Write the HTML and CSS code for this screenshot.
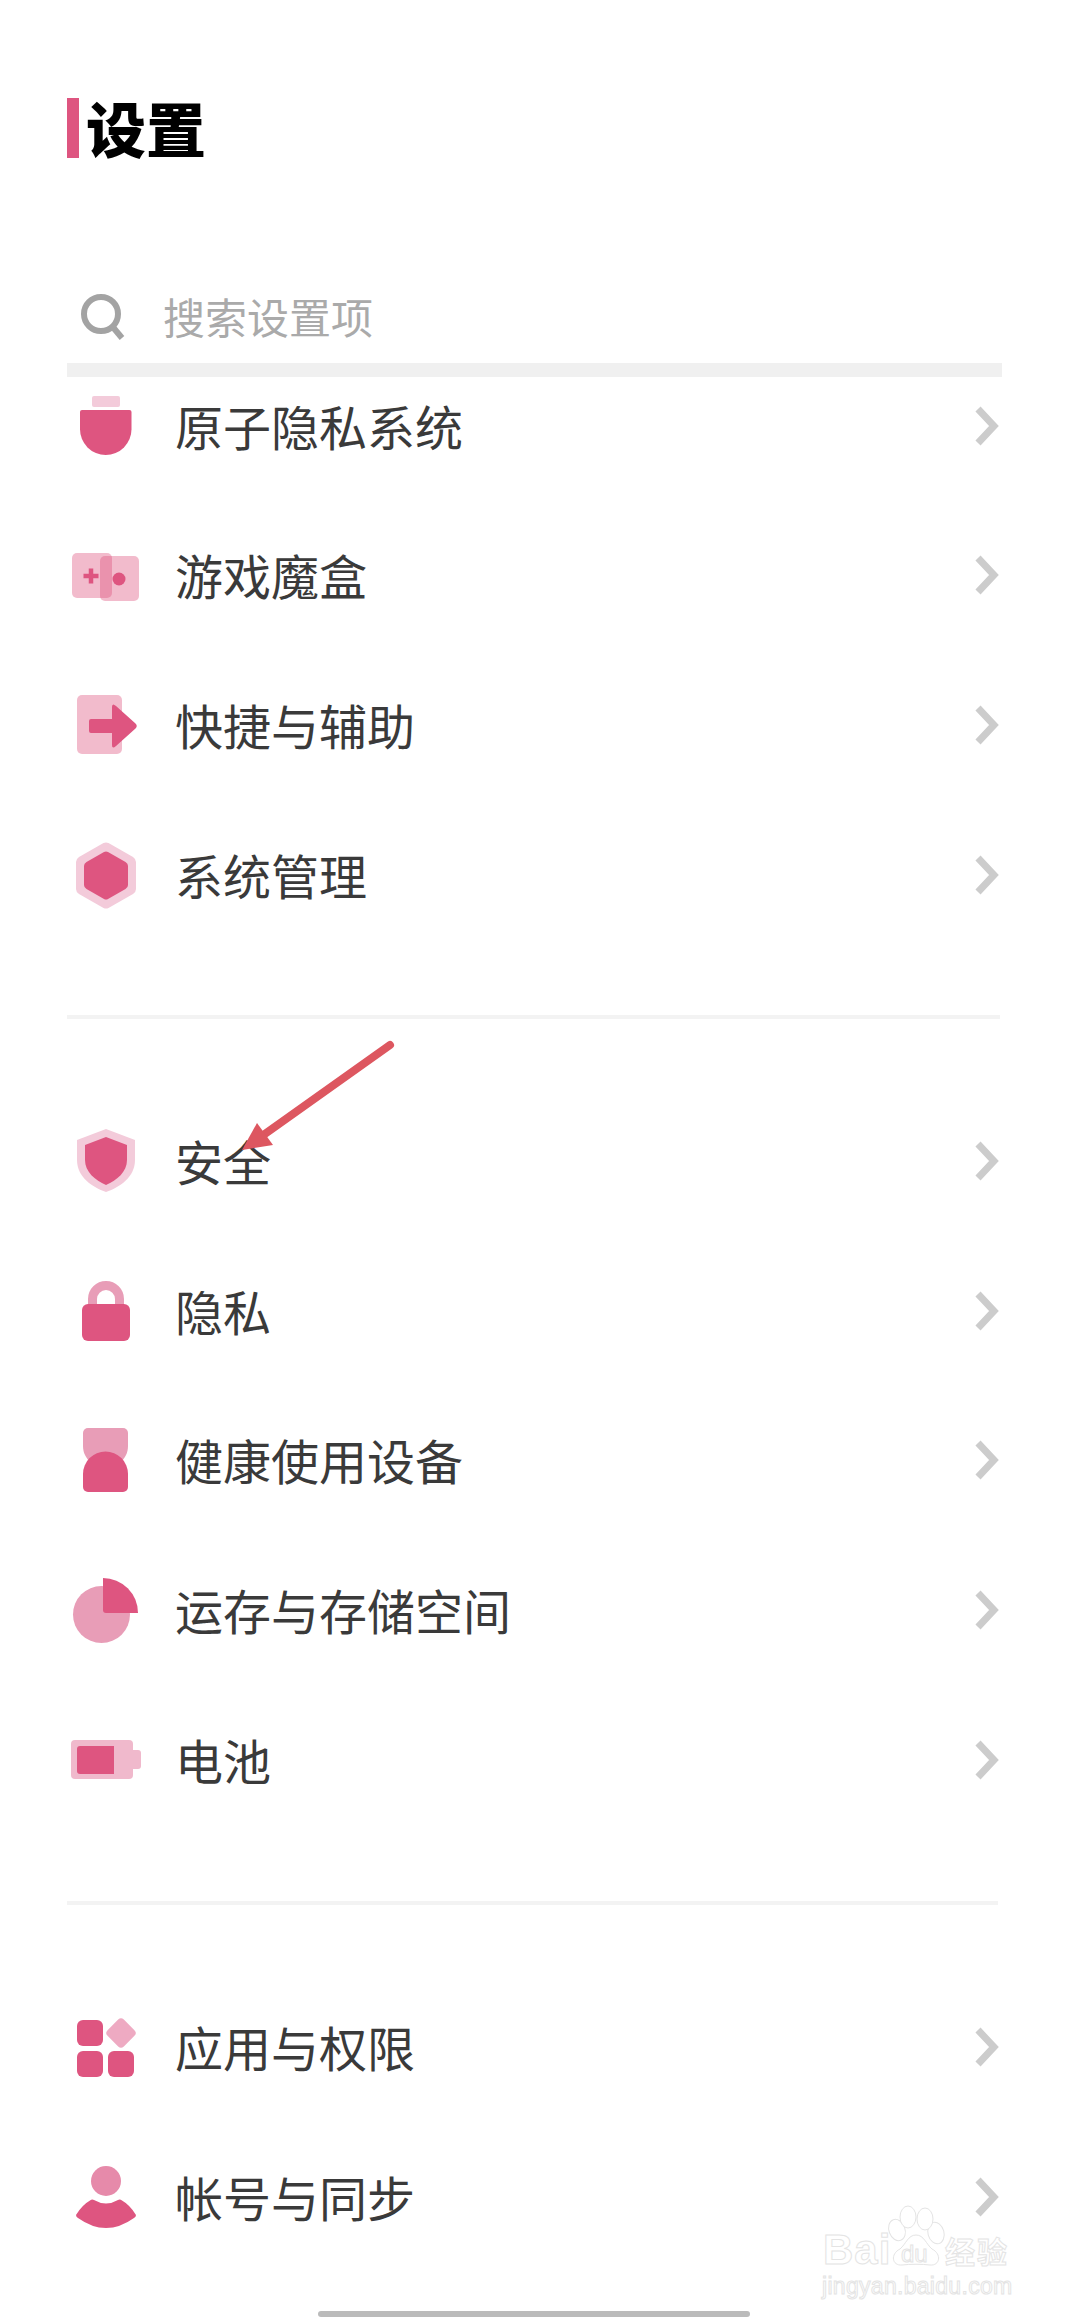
FILE: index.html
```html
<!DOCTYPE html>
<html lang="zh-CN">
<head>
  <meta charset="UTF-8" />
  <title>设置</title>
  <link rel="stylesheet" href="styles.css">
</head>
<body>

  <div class="page">

    <header class="page-title">
      <span class="title-bar"></span>
      <h1>设置</h1>
    </header>

    <div class="search">
      <svg class="search-icon" viewBox="0 0 45 48"><circle cx="20" cy="20" r="17" class="search-stroke" /><path d="M31 32 L41 44" class="search-stroke" /></svg>
      <span class="search-text">搜索设置项</span>
    </div>
    <div class="search-rule"></div>

    <div class="list-clip">
      <section class="group group-scrolled">
        <div class="row">
          <svg class="icon" viewBox="0 0 72 70"><rect x="22" y="4" width="28" height="11" rx="2" class="pale" /><path d="M10 20 a2 2 0 0 1 2 -2 H59.500 a2 2 0 0 1 2 2 V37.250 a25.750 25.750 0 0 1 -51.500 0 Z" class="solid" /></svg>
          <span class="label">原子隐私系统</span>
          <svg class="chevron" viewBox="0 0 24 40"><path d="M3 3 L19 20 L3 37" /></svg>
        </div>
        <div class="row">
          <svg class="icon" viewBox="0 0 72 70"><rect x="2" y="12" width="40" height="45" rx="5" class="tint" /><rect x="30" y="15" width="39" height="45" rx="5" class="tint" /><path d="M13.500 35 H28.500 M21 27.500 V42.500" class="plus" /><circle cx="49" cy="38" r="6.500" class="solid" /></svg>
          <span class="label">游戏魔盒</span>
          <svg class="chevron" viewBox="0 0 24 40"><path d="M3 3 L19 20 L3 37" /></svg>
        </div>
        <div class="row">
          <svg class="icon" viewBox="0 0 72 70"><rect x="7" y="4" width="45" height="59" rx="5" class="tint" /><path d="M21 28 H42 V16 Q42 11.500 46 15 L65.500 32.500 Q68 35 65.500 37.500 L46 55 Q42 58.500 42 54 V42 H21 Q19 42 19 40 V30 Q19 28 21 28 Z" class="solid" /></svg>
          <span class="label">快捷与辅助</span>
          <svg class="chevron" viewBox="0 0 24 40"><path d="M3 3 L19 20 L3 37" /></svg>
        </div>
        <div class="row">
          <svg class="icon" viewBox="0 0 72 70"><path d="M33.500 2 Q36 0.800 38.500 2 L63 16 Q66 18 66 21 V48 Q66 51 63 53 L38.500 67 Q36 68.200 33.500 67 L9 53 Q6 51 6 48 V21 Q6 18 9 16 Z" class="pale" /><path d="M34 11 Q36 10 38 11 L55.500 21 Q58 22.500 58 25 V44 Q58 46.500 55.500 48 L38 58 Q36 59 34 58 L16.500 48 Q14 46.500 14 44 V25 Q14 22.500 16.500 21 Z" class="solid" /></svg>
          <span class="label">系统管理</span>
          <svg class="chevron" viewBox="0 0 24 40"><path d="M3 3 L19 20 L3 37" /></svg>
        </div>
      </section>
    </div>

    <div class="divider divider-first"></div>

    <section class="group group-second">
      <div class="row">
        <svg class="icon" viewBox="0 0 72 70"><path d="M36 2 L65 13 V33 C65 50 50 60 36 65 C22 60 7 50 7 33 V13 Z" class="pale" /><path d="M36 10 L57 18 V33 C57 45 47 53 36 58 C25 53 15 45 15 33 V18 Z" class="solid" /></svg>
        <span class="label">安全</span>
        <svg class="chevron" viewBox="0 0 24 40"><path d="M3 3 L19 20 L3 37" /></svg>
      </div>
      <div class="row">
        <svg class="icon" viewBox="0 0 72 70"><path d="M22.500 29 V22 a13.500 13.500 0 0 1 27 0 V29" class="shackle" /><rect x="12" y="27" width="48" height="37" rx="6" class="solid" /></svg>
        <span class="label">隐私</span>
        <svg class="chevron" viewBox="0 0 24 40"><path d="M3 3 L19 20 L3 37" /></svg>
      </div>
      <div class="row">
        <svg class="icon" viewBox="0 0 72 70"><path d="M18 2 H53 a5 5 0 0 1 5 5 V20 C58 27 55 32 50 37 H21 C16 32 13 27 13 20 V7 a5 5 0 0 1 5 -5 Z" class="mid" /><path d="M13 48 a22.500 22.500 0 0 1 45 0 V61 a5 5 0 0 1 -5 5 H18 a5 5 0 0 1 -5 -5 Z" class="solid" /></svg>
        <span class="label">健康使用设备</span>
        <svg class="chevron" viewBox="0 0 24 40"><path d="M3 3 L19 20 L3 37" /></svg>
      </div>
      <div class="row">
        <svg class="icon" viewBox="0 0 72 70"><circle cx="31.500" cy="38.500" r="28.500" class="mid" /><path d="M33 2 A35 35 0 0 1 68 37 H36 a3 3 0 0 1 -3 -3 Z" class="solid" /></svg>
        <span class="label">运存与存储空间</span>
        <svg class="chevron" viewBox="0 0 24 40"><path d="M3 3 L19 20 L3 37" /></svg>
      </div>
      <div class="row">
        <svg class="icon" viewBox="0 0 72 70"><rect x="1" y="14" width="62" height="39" rx="4" class="soft" /><path d="M63 24 H68 a3 3 0 0 1 3 3 V40 a3 3 0 0 1 -3 3 H63 Z" class="soft" /><path d="M10 20 H44 V48 H10 a3 3 0 0 1 -3 -3 V23 a3 3 0 0 1 3 -3 Z" class="solid" /></svg>
        <span class="label">电池</span>
        <svg class="chevron" viewBox="0 0 24 40"><path d="M3 3 L19 20 L3 37" /></svg>
      </div>
    </section>

    <div class="divider divider-second"></div>

    <section class="group group-third">
      <div class="row">
        <svg class="icon" viewBox="0 0 72 70"><rect x="7" y="7" width="26" height="26" rx="6" class="solid" /><rect x="7" y="38" width="26" height="26" rx="6" class="solid" /><rect x="38" y="38" width="26" height="26" rx="6" class="solid" /><rect x="39.500" y="8.500" width="23" height="23" rx="4" transform="rotate(45 51 20)" class="light" /></svg>
        <span class="label">应用与权限</span>
        <svg class="chevron" viewBox="0 0 24 40"><path d="M3 3 L19 20 L3 37" /></svg>
      </div>
      <div class="row">
        <svg class="icon" viewBox="0 0 72 70"><circle cx="36" cy="18" r="15" class="head" /><path d="M20 37.500 Q22 36 24 37 Q36 44 48 37 Q50 36 52 37.500 Q60 42 66 52 Q66 54 64 55 Q36 75 8 55 Q6 54 6 52 Q12 42 20 37.500 Z" class="solid" /></svg>
        <span class="label">帐号与同步</span>
        <svg class="chevron" viewBox="0 0 24 40"><path d="M3 3 L19 20 L3 37" /></svg>
      </div>
    </section>

    <!-- red arrow drawn over the screenshot -->
    <svg class="callout" viewBox="0 0 200 130">
      <path d="M160 15 L32 106" class="callout-line" />
      <path d="M12 120 L27 93 L43 115 Z" class="callout-head" />
    </svg>

    <!-- stock photo-site watermark -->
    <svg class="watermark" viewBox="0 0 210 90">
      <text x="1" y="45.500" class="wm-big">Bai</text>
      <ellipse cx="75" cy="12" rx="8" ry="11" class="wm-shape" transform="rotate(-20 75 12)" />
      <ellipse cx="114" cy="15" rx="8" ry="11" class="wm-shape" transform="rotate(-15 114 15)" />
      <ellipse cx="86" cy="-1" rx="8" ry="11" class="wm-shape" />
      <ellipse cx="103" cy="1" rx="8" ry="11" class="wm-shape" />
      <path d="M94 17 C102 17 104 26 110 31 C120 36 118 48 108 47 C100 46 88 46 80 47 C70 48 68 36 78 31 C84 26 86 17 94 17 Z" class="wm-shape" />
      <text x="79" y="44" class="wm-du">du</text>
      <text x="123" y="45" class="wm-cjk">经验</text>
      <text x="0" y="75.500" class="wm-url">jingyan.baidu.com</text>
    </svg>

    <div class="home-bar"></div>

  </div>

</body>
</html>
```

FILE: styles.css
```css
* {
  box-sizing: border-box;
}

body {
  margin: 0;
  background: #fff;
  font-family: "Noto Sans CJK SC", "Noto Sans", sans-serif;
  color: #3a3a3a;
}

.page {
  position: relative;
  width: 1072px;
  height: 2320px;
  padding: 98px 70px 0 67px;
  overflow: hidden;
}

.page-title {
  display: flex;
  align-items: center;
  gap: 7px;
  height: 60px;
}

.title-bar {
  width: 12px;
  height: 60px;
  background: #de5580;
}

h1 {
  margin: -3px 0 0;
  font-size: 60px;
  line-height: 60px;
  font-weight: 900;
  color: #000;
}

.search {
  display: flex;
  align-items: center;
  gap: 37px;
  height: 60px;
  margin-top: 130px;
  padding-left: 14px;
}

.search-icon {
  width: 45px;
  height: 48px;
  flex-shrink: 0;
  margin-top: -1px;
}

.search-stroke {
  fill: none;
  stroke: #a3a3a3;
  stroke-width: 6;
}

.search-text {
  margin-top: -4px;
  font-size: 42px;
  line-height: 60px;
  color: #aaa;
}

.search-rule {
  height: 14px;
  margin-top: 15px;
  background: #f0f0f0;
}

.list-clip {
  overflow: hidden;
}

.group-scrolled {
  margin-top: -25px;
}

.group-second {
  margin-top: 68px;
}

.group-third {
  margin-top: 68px;
}

.row {
  display: flex;
  align-items: center;
  height: 149.6px;
  padding: 0 3px 0 3px;
}

.icon {
  width: 72px;
  height: 70px;
  flex-shrink: 0;
  overflow: visible;
}

.label {
  flex: 1;
  margin-top: -4px;
  margin-left: 33px;
  font-size: 48px;
  line-height: 60px;
}

.chevron {
  width: 24px;
  height: 40px;
  flex-shrink: 0;
  margin-top: -2px;
}

.chevron path {
  fill: none;
  stroke: #ccc;
  stroke-width: 7;
}

.solid {
  fill: #de5580;
}

.pale {
  fill: #f3cbda;
}

.soft {
  fill: #f0b9cc;
}

.mid {
  fill: #e89db7;
}

.light {
  fill: #eeaac2;
}

.head {
  fill: #e68aaa;
}

.tint {
  fill: #de5580;
  opacity: 0.4;
}

.plus {
  fill: none;
  stroke: #de5580;
  stroke-width: 4.5;
}

.shackle {
  fill: none;
  stroke: #e89db7;
  stroke-width: 9;
}

.divider {
  height: 4px;
  margin-top: 65px;
  margin-right: 2px;
  background: #f3f3f3;
}

.divider-second {
  margin-top: 66px;
  margin-right: 4px;
}

.callout {
  position: absolute;
  left: 230px;
  top: 1030px;
  width: 200px;
  height: 130px;
}

.callout-line {
  fill: none;
  stroke: #dd5760;
  stroke-width: 8;
  stroke-linecap: round;
}

.callout-head {
  fill: #dd5760;
}

.watermark {
  position: absolute;
  left: 822px;
  top: 2218px;
  width: 210px;
  height: 90px;
  overflow: visible;
}

.watermark text {
  fill: #fff;
  stroke: #e4e4e4;
  stroke-width: 1;
}

.wm-big {
  font-family: "Liberation Sans", sans-serif;
  font-size: 42px;
  font-weight: 700;
  letter-spacing: 1px;
}

.wm-du {
  font-family: "Liberation Sans", sans-serif;
  font-size: 24px;
}

.wm-cjk {
  font-size: 30px;
  font-weight: 700;
  letter-spacing: 2px;
}

.wm-url {
  font-family: "Liberation Sans", sans-serif;
  font-size: 23px;
  letter-spacing: 0.3px;
}

.wm-shape {
  fill: #fff;
  stroke: #e4e4e4;
  stroke-width: 1;
}

.home-bar {
  position: absolute;
  left: 318px;
  bottom: 3px;
  width: 432px;
  height: 6px;
  border-radius: 3px;
  background: #bbb;
}
```
